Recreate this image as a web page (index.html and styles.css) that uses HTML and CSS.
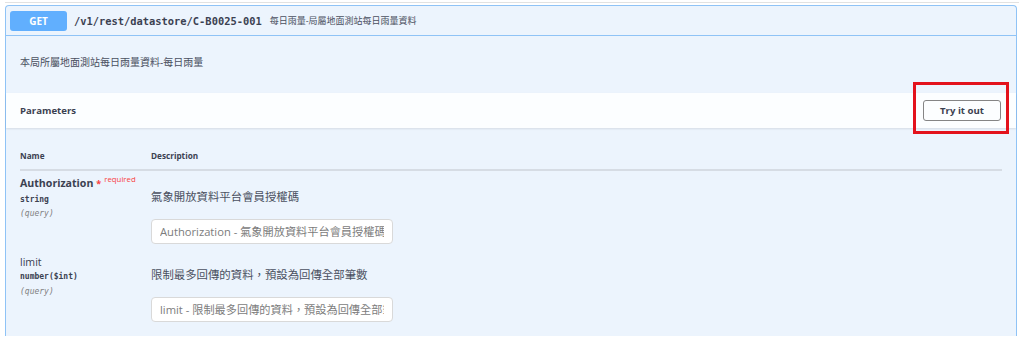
FILE: index.html
```html
<!DOCTYPE html>
<html lang="zh-Hant">
<head>
  <meta charset="utf-8">
  <title>C-B0025-001</title>
  <link rel="stylesheet" href="styles.css">
</head>
<body>
  <div class="prev-block"></div>

  <div class="opblock">
    <!-- Kopfzeile mit Methode und Pfad -->
    <div class="summary">
      <span class="method">GET</span>
      <span class="path">/v1/rest/datastore/C-B0025-001</span>
      <span class="summary-desc">每日雨量-局屬地面測站每日雨量資料</span>
    </div>

    <div class="desc">本局所屬地面測站每日雨量資料-每日雨量</div>

    <div class="params-header">
      <span class="params-title">Parameters</span>
      <button class="try-btn">Try it out</button>
      <div class="highlight"></div>
    </div>

    <div class="params">
      <div class="params-head">
        <span>Name</span>
        <span>Description</span>
      </div>

      <div class="param-row first">
        <div class="param-name">
          <div class="name required">Authorization<span class="star">*</span><span class="req">required</span></div>
          <div class="type">string</div>
          <div class="in">(query)</div>
        </div>
        <div class="param-desc">
          <div class="desc-text">氣象開放資料平台會員授權碼</div>
          <input type="text" placeholder="Authorization - 氣象開放資料平台會員授權碼">
        </div>
      </div>

      <div class="param-row second">
        <div class="param-name">
          <div class="name">limit</div>
          <div class="type">number($int)</div>
          <div class="in">(query)</div>
        </div>
        <div class="param-desc">
          <div class="desc-text">限制最多回傳的資料，預設為回傳全部筆數</div>
          <input type="text" placeholder="limit - 限制最多回傳的資料，預設為回傳全部筆數">
        </div>
      </div>
    </div>
  </div>
</body>
</html>
```

FILE: styles.css
```css
body {
  margin: 0;
  background: #fff;
  color: #3b4151;
  font-family: "Open Sans", "Noto Sans CJK TC", sans-serif;
}
.prev-block {
  height: 2px;
  margin: 0 5px;
  border-bottom: 1px solid #e2e2e2;
}
.opblock {
  margin: 2px 7px 0 5px;
  height: 331px;
  box-sizing: border-box;
  border: 1px solid #8fc3f6;
  border-bottom: none;
  border-radius: 4px 4px 0 0;
  background: #ecf4fd;
}
.summary {
  display: flex;
  align-items: center;
  height: 29px;
  padding: 0 4px;
  border-bottom: 1px solid #8fc3f6;
}
.method {
  width: 57px;
  height: 20px;
  line-height: 20px;
  text-align: center;
  background: #61affe;
  color: #fff;
  border-radius: 3px;
  font-weight: bold;
  font-size: 10px;
}
.path {
  margin-left: 7px;
  font-family: "DejaVu Sans Mono", monospace;
  font-weight: bold;
  font-size: 10.4px;
}
.summary-desc {
  margin-left: 8px;
  font-size: 9px;
  color: #4a5060;
}
.desc {
  height: 57px;
  box-sizing: border-box;
  padding: 19px 14px 0;
  font-size: 10px;
  line-height: 14px;
  color: #4a5060;
}
.params-header {
  position: relative;
  display: flex;
  align-items: center;
  justify-content: space-between;
  height: 35px;
  padding: 0 15px 0 14px;
  background: rgba(255, 255, 255, 0.85);
  box-shadow: 0 1px 2px rgba(0, 0, 0, 0.1);
}
.params-title {
  font-weight: bold;
  font-size: 9.6px;
}
.try-btn {
  width: 78px;
  height: 21px;
  padding: 0;
  border: 1.5px solid #858585;
  border-radius: 3px;
  background: transparent;
  color: #3b4151;
  font-family: inherit;
  font-weight: bold;
  font-size: 9.6px;
}
/* rote Markierung um den Button */
.highlight {
  position: absolute;
  left: 907px;
  top: -11px;
  width: 96px;
  height: 52px;
  box-sizing: border-box;
  border: 3.5px solid #e3121c;
}
.params {
  padding: 0 14px;
}
.params-head {
  display: grid;
  grid-template-columns: 131px 1fr;
  padding: 22px 0 7px;
  font-size: 8.2px;
  line-height: 12px;
  font-weight: bold;
  border-bottom: 2px solid #d6dce4;
}
.param-row {
  display: grid;
  grid-template-columns: 131px 1fr;
  align-items: start;
}
.param-row.second {
  margin-top: 11px;
}
.name {
  font-size: 10.6px;
  line-height: 14px;
}
.first .name {
  margin-top: 5px;
}
.name.required {
  font-weight: bold;
}
.star {
  color: #f93e3e;
  margin-left: 3px;
  font-size: 9px;
}
.req {
  position: relative;
  top: -5px;
  margin-left: 3px;
  color: #f93e3e;
  font-weight: normal;
  font-size: 7.8px;
}
.type {
  font-family: "DejaVu Sans Mono", monospace;
  font-weight: bold;
  font-size: 8px;
  line-height: 10px;
  margin-top: 4px;
}
.second .type {
  margin-top: 3px;
}
.in {
  font-family: "DejaVu Sans Mono", monospace;
  font-style: italic;
  font-size: 8px;
  line-height: 10px;
  color: #808080;
  margin-top: 4px;
}
.second .in {
  margin-top: 5px;
}
.desc-text {
  font-size: 11.4px;
  line-height: 14px;
  margin-top: 19px;
  color: #4a5060;
}
.second .desc-text {
  margin-top: 13px;
}
.param-desc input {
  display: block;
  width: 242px;
  height: 25px;
  box-sizing: border-box;
  margin-top: 15px;
  padding: 0 8px;
  border: 1px solid #d9d9d9;
  border-radius: 4px;
  background: #fff;
  font-family: inherit;
  font-size: 11.2px;
  outline: none;
}
.param-desc input::placeholder {
  color: #7c7c7c;
}
```
